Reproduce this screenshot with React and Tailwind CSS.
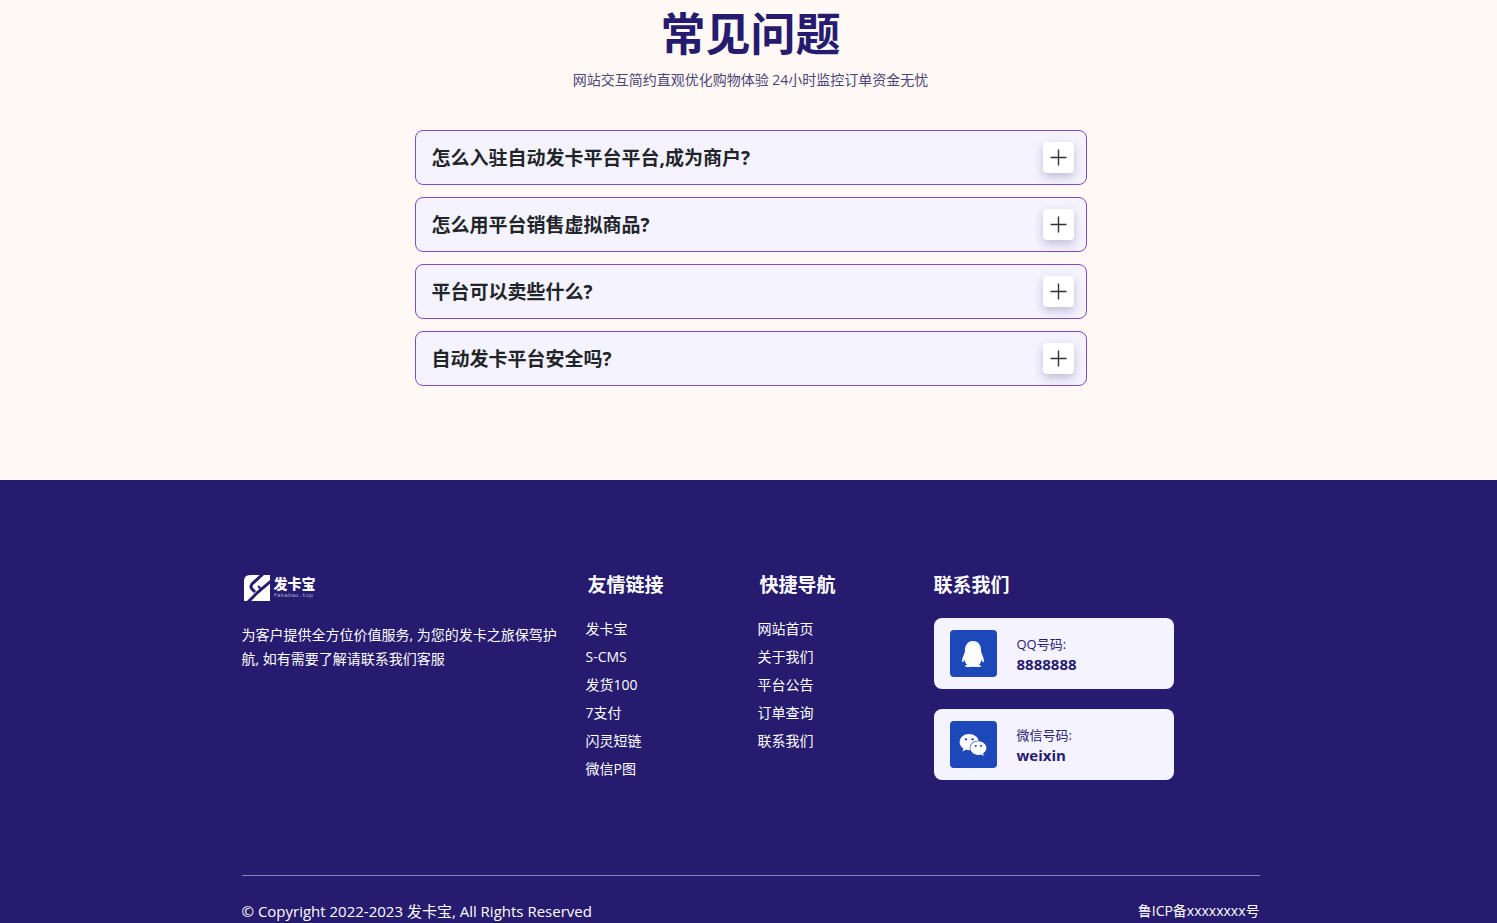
import React, { useState } from "react";
import { FaQq, FaWeixin } from "react-icons/fa";

const questions = [
  { title: "怎么入驻自动发卡平台平台,成为商户?", answer: "注册账号并提交资料,审核通过后即可成为商户。" },
  { title: "怎么用平台销售虚拟商品?", answer: "登录商户后台,添加商品和卡密后即可开始销售。" },
  { title: "平台可以卖些什么?", answer: "可以销售各类合法合规的虚拟商品。" },
  { title: "自动发卡平台安全吗?", answer: "平台24小时监控订单,保障资金安全。" },
];

const friendLinks = ["发卡宝", "S-CMS", "发货100", "7支付", "闪灵短链", "微信P图"];
const navLinks = ["网站首页", "关于我们", "平台公告", "订单查询", "联系我们"];

const contacts = [
  { label: "QQ号码:", value: "8888888", icon: <FaQq className="size-[26px]" /> },
  { label: "微信号码:", value: "weixin", icon: <FaWeixin className="size-[28px]" /> },
];

const Logo = () => (
  <a href="#" className="flex items-center gap-1 pl-0.5">
    <svg viewBox="0 0 26 26" className="size-[26px]" aria-hidden="true">
      <path fill="#fff" d="M6 0H26V26H0V6Q0 0 6 0Z" />
      <g fill="none" stroke="#261b6e" strokeWidth="3">
        <path d="M19 -1L8 9Q6 12 8 14L11 17" />
        <path d="M27 6L14 17L4 27" />
        <path d="M14 11L17 14" strokeWidth="2" />
      </g>
    </svg>
    <span className="flex flex-col">
      <span className="text-sm leading-4 font-black">发卡宝</span>
      <span className="font-['Liberation_Mono',monospace] text-[6px] leading-2 text-[#a9a4cf]">
        fakabao.top
      </span>
    </span>
  </a>
);

const FaqItem = ({ title, answer }) => {
  const [open, setOpen] = useState(false);

  return (
    <div className="rounded-lg border border-[#8049d0] bg-[#f5f3ff]">
      <button
        type="button"
        aria-expanded={open}
        onClick={() => setOpen(!open)}
        className="flex w-full cursor-pointer items-center justify-between py-[11px] pr-3 pl-4 text-left"
      >
        <span className="text-[19px] leading-7 font-bold text-[#212529]">{title}</span>
        <span className="flex size-[31px] shrink-0 items-center justify-center rounded-sm bg-white shadow-[0_4px_10px_rgba(40,30,90,0.25)]">
          <svg viewBox="0 0 17 17" className="size-[17px]" stroke="#333" strokeWidth="1.4" aria-hidden="true">
            <path d="M8.5 0.5V16.5M0.5 8.5H16.5" />
          </svg>
        </span>
      </button>
      {open && <p className="px-4 pb-4 text-sm text-[#4d4575]">{answer}</p>}
    </div>
  );
};

const LinkList = ({ title, links }) => (
  <nav aria-label={title}>
    <h3 className="pl-0.5 text-[19px] leading-7 font-bold">{title}</h3>
    <ul className="mt-4">
      {links.map((link) => (
        <li key={link} className="text-sm leading-7">
          <a href="#" className="hover:underline">
            {link}
          </a>
        </li>
      ))}
    </ul>
  </nav>
);

const App = () => {
  return (
    <div className="bg-[#fff9f5] font-['Open_Sans','Noto_Sans_CJK_SC',sans-serif]">
      <section className="pt-1 pr-4 pb-[94px] pl-5">
        <div className="mx-auto max-w-[672px]">
          <h2 className="text-center text-[45px] leading-[60px] font-bold text-[#261b6e]">
            常见问题
          </h2>
          <p className="mt-1 text-center text-sm leading-6 text-[#4d4575]">
            网站交互简约直观优化购物体验 24小时监控订单资金无忧
          </p>
          <div className="mt-[38px] flex flex-col gap-3">
            {questions.map((item) => (
              <FaqItem key={item.title} title={item.title} answer={item.answer} />
            ))}
          </div>
        </div>
      </section>

      <footer className="bg-[#261b6e] pr-4 pl-5 text-white">
        <div className="mx-auto max-w-[1018px] pt-[91px]">
          <div className="grid grid-cols-[344fr_172fr_176fr_326fr]">
            <div className="pt-1 pr-6">
              <Logo />
              <p className="mt-[22px] text-sm leading-6">
                为客户提供全方位价值服务, 为您的发卡之旅保驾护航, 如有需要了解请联系我们客服
              </p>
            </div>
            <LinkList title="友情链接" links={friendLinks} />
            <LinkList title="快捷导航" links={navLinks} />
            <div>
              <h3 className="text-[19px] leading-7 font-bold">联系我们</h3>
              <div className="mt-[19px] flex max-w-60 flex-col gap-5">
                {contacts.map((contact) => (
                  <div
                    key={contact.label}
                    className="flex items-center gap-5 rounded-lg bg-[#f5f3ff] px-4 py-3 text-[#261b6e]"
                  >
                    <span className="flex size-[47px] shrink-0 items-center justify-center rounded-sm bg-[#1d48ba] text-white">
                      {contact.icon}
                    </span>
                    <div>
                      <p className="text-[13px] leading-5">{contact.label}</p>
                      <p className="text-[15px] leading-5 font-bold">{contact.value}</p>
                    </div>
                  </div>
                ))}
              </div>
            </div>
          </div>
          <div className="mt-[92px] flex justify-between border-t border-[#8a84b5] pt-[23px] leading-6">
            <p className="text-[15px]">© Copyright 2022-2023 发卡宝, All Rights Reserved</p>
            <a href="#" className="text-sm leading-6">
              鲁ICP备xxxxxxxx号
            </a>
          </div>
        </div>
      </footer>
    </div>
  );
};

export default App;
